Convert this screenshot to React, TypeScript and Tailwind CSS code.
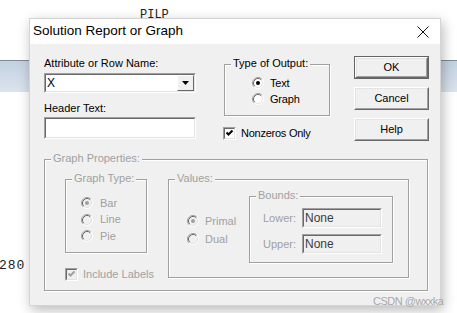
import React from "react";

const ui = { fontFamily: '"Liberation Sans", Arial, sans-serif' };
const mono = { fontFamily: '"Liberation Mono", "Courier New", monospace' };

function Radio({ checked, disabled }: { checked?: boolean; disabled?: boolean }) {
  return (
    <svg width="12" height="12" viewBox="0 0 12 12" className="shrink-0">
      <circle cx="6" cy="6" r="5" fill={disabled ? "#f0f0f0" : "#fff"} />
      <path d="M2.11 9.89 A5.5 5.5 0 0 1 9.89 2.11" stroke="#a0a0a0" fill="none" />
      <path d="M9.89 2.11 A5.5 5.5 0 0 1 2.11 9.89" stroke="#ffffff" fill="none" />
      <path d="M2.82 9.18 A4.5 4.5 0 0 1 9.18 2.82" stroke="#696969" fill="none" />
      <path d="M9.18 2.82 A4.5 4.5 0 0 1 2.82 9.18" stroke="#e3e3e3" fill="none" />
      {checked && <circle cx="6" cy="6" r="2" fill={disabled ? "#a0a0a0" : "#000"} />}
    </svg>
  );
}

function CheckBox({ disabled }: { disabled?: boolean }) {
  return (
    <div className="w-[13px] h-[13px] shrink-0 border border-t-[#a0a0a0] border-l-[#a0a0a0] border-r-white border-b-white">
      <div
        className={`w-full h-full border border-t-[#696969] border-l-[#696969] border-r-[#e3e3e3] border-b-[#e3e3e3] ${
          disabled ? "bg-[#f0f0f0]" : "bg-white"
        }`}
      >
        <svg width="9" height="9" viewBox="0 0 9 9">
          <path d="M1.5 3.5 L3.5 5.5 L7.5 1.5" stroke={disabled ? "#a0a0a0" : "#000"} strokeWidth="2" fill="none" />
        </svg>
      </div>
    </div>
  );
}

function Sunken({ className, children }: { className?: string; children?: React.ReactNode }) {
  return (
    <div className={`border border-t-[#a0a0a0] border-l-[#a0a0a0] border-r-white border-b-white ${className ?? ""}`}>
      <div className="w-full h-full border border-t-[#696969] border-l-[#696969] border-r-[#e3e3e3] border-b-[#e3e3e3] flex items-center">
        {children}
      </div>
    </div>
  );
}

function Button({ label, isDefault }: { label: string; isDefault?: boolean }) {
  return (
    <div className={`w-[75px] h-[23px] bg-[#f0f0f0] ${isDefault ? "border border-[#646464]" : ""}`}>
      <div className="w-full h-full border border-t-white border-l-white border-r-[#696969] border-b-[#696969]">
        <div className="w-full h-full border border-t-[#e3e3e3] border-l-[#e3e3e3] border-r-[#a0a0a0] border-b-[#a0a0a0] flex items-center justify-center text-[11px] text-black">
          {label}
        </div>
      </div>
    </div>
  );
}

function Group({
  label,
  className,
  disabled,
  children,
}: {
  label: string;
  className?: string;
  disabled?: boolean;
  children?: React.ReactNode;
}) {
  return (
    <div
      className={`relative border border-[#a0a0a0] shadow-[inset_1px_1px_0_#fff,1px_1px_0_#fff] ${className ?? ""}`}
    >
      <span
        className={`absolute -top-[8px] left-[6px] bg-[#f0f0f0] px-[2px] leading-[13px] text-[11px] whitespace-nowrap ${
          disabled ? "text-[#a0a0a0]" : "text-black"
        }`}
      >
        {label}
      </span>
      {children}
    </div>
  );
}

export default function App() {
  return (
    <div className="relative w-[457px] h-[313px] overflow-hidden bg-white" style={ui}>
      {/* background app behind the dialog */}
      <div className="absolute left-[140px] top-[6px] text-[12px] text-[#222]" style={mono}>
        PILP
      </div>
      <div className="absolute left-0 right-0 top-[60px] h-[32px] border-t border-[#7f8b98] bg-gradient-to-b from-[#c3d1e0] to-[#dbe4ee]" />
      <div className="absolute -left-[1px] top-[256px] text-[13px] tracking-[1px] text-[#222]" style={mono}>
        280
      </div>

      {/* dialog */}
      <div className="absolute left-[29px] top-[18px] w-[412px] h-[288px] bg-[#f0f0f0] border border-[#d4d4d4] shadow-[2px_4px_12px_rgba(0,0,0,0.28)] text-[11px] text-black">
        <div className="h-[25px] bg-white flex items-center justify-between pl-[3px] pr-[11px]">
          <span className="text-[13.5px] text-black">Solution Report or Graph</span>
          <svg width="12" height="12" viewBox="0 0 12 12">
            <path d="M0.5 0.5 L11.5 11.5 M11.5 0.5 L0.5 11.5" stroke="#111" strokeWidth="1" />
          </svg>
        </div>

        <div className="pl-[14px]">
          <div className="flex h-[115px]">
            {/* left column */}
            <div className="w-[152px] pt-[13px] flex flex-col">
              <span className="leading-[13px]">Attribute or Row Name:</span>
              <Sunken className="mt-[3px] w-[152px] h-[20px] bg-white">
                <span className="pl-[1px] text-[12px] flex-1">X</span>
                <div className="w-[17px] h-[16px] bg-[#f0f0f0] border border-t-white border-l-white border-r-[#696969] border-b-[#696969] flex items-center justify-center">
                  <svg width="7" height="4" viewBox="0 0 7 4">
                    <path d="M0 0 H7 L3.5 4 Z" fill="#000" />
                  </svg>
                </div>
              </Sunken>
              <span className="mt-[9px] leading-[13px]">Header Text:</span>
              <Sunken className="mt-[2px] w-[152px] h-[22px] bg-white" />
            </div>

            {/* middle column */}
            <div className="ml-[28px] pt-[20px] w-[106px] flex flex-col">
              <Group label="Type of Output:" className="h-[52px] w-[106px]">
                <div className="flex flex-col pl-[27px] pt-[12px] gap-[4px]">
                  <div className="flex items-center gap-[6px] h-[12px]">
                    <Radio checked />
                    <span className="tracking-[-0.2px]">Text</span>
                  </div>
                  <div className="flex items-center gap-[6px] h-[12px]">
                    <Radio />
                    <span className="tracking-[-0.2px]">Graph</span>
                  </div>
                </div>
              </Group>
              <div className="mt-[9px] -ml-[1px] flex items-center gap-[5px]">
                <CheckBox />
                <span className="tracking-[-0.25px] whitespace-nowrap">Nonzeros Only</span>
              </div>
            </div>

            {/* buttons */}
            <div className="ml-[24px] pt-[12px] flex flex-col gap-[8px]">
              <Button label="OK" isDefault />
              <Button label="Cancel" />
              <Button label="Help" />
            </div>
          </div>

          {/* graph properties */}
          <Group label="Graph Properties:" disabled className="w-[384px] h-[132px]">
            <div className="flex pl-[20px] pt-[19px] text-[#a0a0a0]">
              <div className="w-[82px] shrink-0 flex flex-col">
                <Group label="Graph Type:" disabled className="w-[82px] h-[74px]">
                  <div className="flex flex-col pl-[15px] pt-[17px] gap-[4.5px]">
                    {["Bar", "Line", "Pie"].map((t, i) => (
                      <div key={t} className="flex items-center gap-[7px] h-[12px]">
                        <Radio checked={i === 0} disabled />
                        <span>{t}</span>
                      </div>
                    ))}
                  </div>
                </Group>
                <div className="mt-[13px] flex items-center gap-[5px] whitespace-nowrap">
                  <CheckBox disabled />
                  <span>Include Labels</span>
                </div>
              </div>

              <Group label="Values:" disabled className="ml-[21px] w-[241px] h-[99px]">
                <div className="flex">
                  <div className="w-[80px] pl-[18px] pt-[35px] flex flex-col gap-[6px]">
                    <div className="flex items-center gap-[6px] h-[12px]">
                      <Radio checked disabled />
                      <span>Primal</span>
                    </div>
                    <div className="flex items-center gap-[6px] h-[12px]">
                      <Radio disabled />
                      <span>Dual</span>
                    </div>
                  </div>
                  <Group label="Bounds:" disabled className="mt-[16px] w-[144px] h-[67px]">
                    <div className="flex flex-col pt-[11px] gap-[6px]">
                      {["Lower:", "Upper:"].map((l) => (
                        <div key={l} className="flex items-center">
                          <span className="w-[46px] text-right">{l}</span>
                          <Sunken className="ml-[6px] w-[80px] h-[20px] bg-[#f0f0f0]">
                            <span className="pl-[1px] text-[12px] text-[#3c3c3c]">None</span>
                          </Sunken>
                        </div>
                      ))}
                    </div>
                  </Group>
                </div>
              </Group>
            </div>
          </Group>
        </div>
      </div>

      <div className="absolute left-[373px] top-[293px] text-[11px] tracking-[-0.5px] text-[#a8a8a8]">CSDN @wxxka</div>
    </div>
  );
}
